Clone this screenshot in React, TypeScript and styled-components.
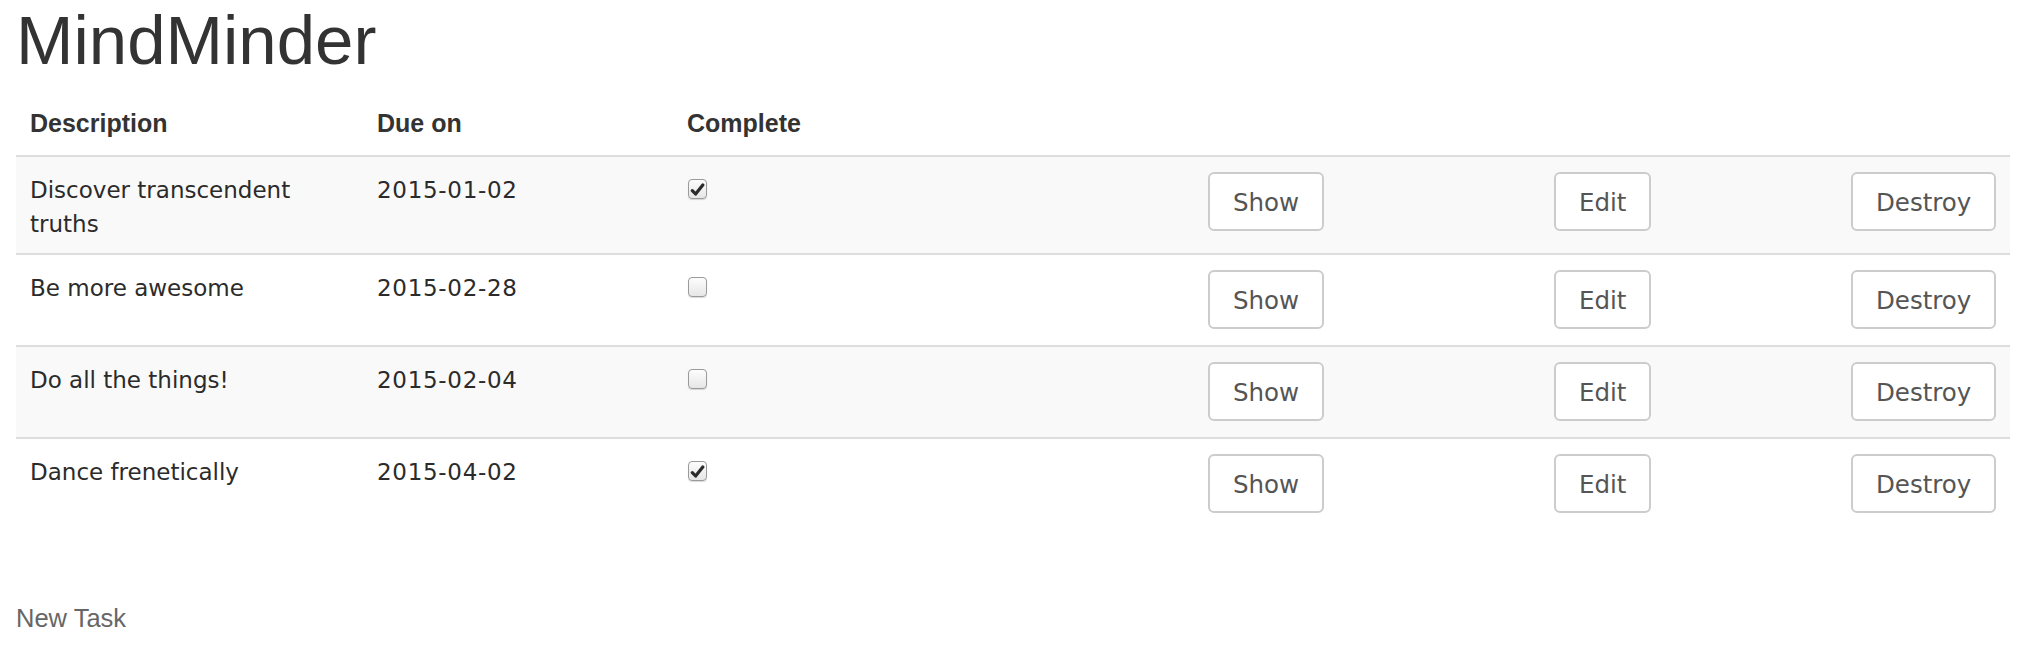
import React from "react";
import styled, { createGlobalStyle } from "styled-components";

const GlobalStyle = createGlobalStyle`
  html, body { margin: 0; padding: 0; background: #fff; }
  body {
    color: #333;
    font-family: "DejaVu Sans", Verdana, sans-serif;
  }
`;

const Page = styled.div`
  padding: 0 22px 0 16px;
`;

const Title = styled.h1`
  font-family: "Liberation Sans", Arial, Helvetica, sans-serif;
  font-size: 69px;
  font-weight: 400;
  line-height: 76px;
  margin: 3px 0 14px 0;
  color: #333;
`;

const Table = styled.table`
  width: 100%;
  table-layout: fixed;
  border-collapse: separate;
  border-spacing: 0;
`;

const Col = styled.col<{ $w: number }>`
  width: ${(p) => p.$w}px;
`;

const Th = styled.th`
  text-align: left;
  font-family: "Liberation Sans", Arial, Helvetica, sans-serif;
  font-weight: 700;
  font-size: 25px;
  line-height: 34px;
  padding: 13px 14px 15px;
  vertical-align: bottom;
  border-bottom: 2px solid #ddd;
  color: #333;
`;

const Row = styled.tr<{ $striped: boolean; $first: boolean }>`
  background: ${(p) => (p.$striped ? "#f9f9f9" : "#fff")};
  & > td {
    border-top: ${(p) => (p.$first ? "none" : "2px solid #ddd")};
  }
`;

const Td = styled.td`
  padding: 16px 14px 12px;
  font-size: 23px;
  line-height: 34px;
  vertical-align: top;
  color: #2b2b2b;
`;

const DateTd = styled(Td)`
  letter-spacing: 0.7px;
`;

const ActionTd = styled(Td)`
  padding: 15px 14px 16px;
`;

const Button = styled.a`
  display: inline-block;
  vertical-align: top;
  font-family: "DejaVu Sans", Verdana, sans-serif;
  font-size: 24.5px;
  line-height: 35px;
  padding: 11px 23px 9px;
  border: 2px solid #ccc;
  border-radius: 6px;
  background: #fff;
  color: #555;
  text-decoration: none;
  cursor: pointer;
`;

const CheckBox = styled.span`
  display: inline-flex;
  align-items: center;
  justify-content: center;
  vertical-align: top;
  box-sizing: border-box;
  width: 19px;
  height: 20px;
  margin: 6px 0 0 1px;
  border: 1px solid #9a9a9a;
  border-radius: 4px;
  background: linear-gradient(#fdfdfd, #e6e6e6);
  box-shadow: 0 1px 1px rgba(0, 0, 0, 0.15);
`;

const NewTask = styled.a`
  display: block;
  margin-top: 72px;
  font-family: "Liberation Sans", Arial, Helvetica, sans-serif;
  font-size: 25.5px;
  line-height: 34px;
  color: #666;
  text-decoration: none;
`;

type Task = { description: string; due: string; complete: boolean };

const tasks: Task[] = [
  { description: "Discover transcendent truths", due: "2015-01-02", complete: true },
  { description: "Be more awesome", due: "2015-02-28", complete: false },
  { description: "Do all the things!", due: "2015-02-04", complete: false },
  { description: "Dance frenetically", due: "2015-04-02", complete: true },
];

const Check = ({ checked }: { checked: boolean }) => (
  <CheckBox role="checkbox" aria-checked={checked}>
    {checked && (
      <svg width="15" height="15" viewBox="0 0 15 15" aria-hidden="true">
        <path
          d="M2.3 8.6 L5.6 12 L12.8 3"
          fill="none"
          stroke="#2b2b2b"
          strokeWidth="3.2"
          strokeLinecap="round"
          strokeLinejoin="round"
        />
      </svg>
    )}
  </CheckBox>
);

export default function App() {
  return (
    <Page>
      <GlobalStyle />
      <Title>MindMinder</Title>
      <Table>
        <colgroup>
          <Col $w={347} />
          <Col $w={310} />
          <Col $w={521} />
          <Col $w={346} />
          <Col $w={297} />
          <Col $w={173} />
        </colgroup>
        <thead>
          <tr>
            <Th>Description</Th>
            <Th>Due on</Th>
            <Th>Complete</Th>
            <Th />
            <Th />
            <Th />
          </tr>
        </thead>
        <tbody>
          {tasks.map((t, i) => (
            <Row key={t.description} $striped={i % 2 === 0} $first={i === 0}>
              <Td>{t.description}</Td>
              <DateTd>{t.due}</DateTd>
              <Td>
                <Check checked={t.complete} />
              </Td>
              <ActionTd>
                <Button>Show</Button>
              </ActionTd>
              <ActionTd>
                <Button>Edit</Button>
              </ActionTd>
              <ActionTd>
                <Button>Destroy</Button>
              </ActionTd>
            </Row>
          ))}
        </tbody>
      </Table>
      <NewTask href="#">New Task</NewTask>
    </Page>
  );
}
